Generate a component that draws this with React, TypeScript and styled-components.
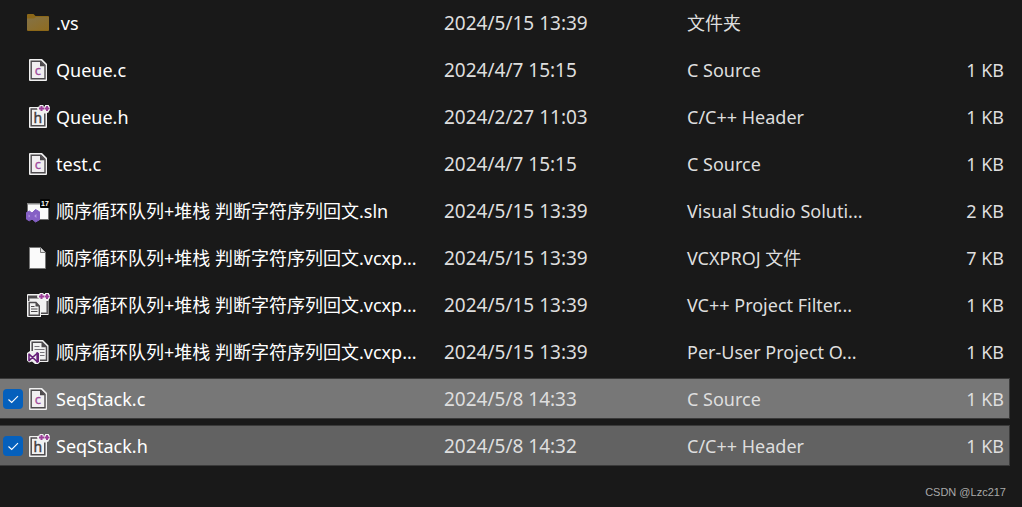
import React, { useState } from "react";
import styled, { createGlobalStyle } from "styled-components";

const GlobalStyle = createGlobalStyle`
  * { box-sizing: border-box; }
  body {
    margin: 0;
    background: #191919;
    color: #dedede;
    font-family: "Noto Sans", "Noto Sans CJK SC", sans-serif;
    font-size: 18px;
    line-height: 24px;
  }
`;

const Page = styled.main`
  min-height: 100vh;
  display: flex;
  flex-direction: column;
  justify-content: space-between;
  padding: 2px 12px 6px 0;
`;

const FileTable = styled.table`
  display: block;
`;

const FileRows = styled.tbody`
  display: flex;
  flex-direction: column;
  gap: 6px;
`;

const FileRow = styled.tr<{ $fill?: string }>`
  display: grid;
  grid-template-columns: 26px 30px 388px 243px 1fr 80px;
  align-items: center;
  height: 41px;
  padding-right: 5px;
  border: 1px solid ${(p) => (p.$fill ? "#3a3a3a" : "transparent")};
  border-left: 0;
  background: ${(p) => p.$fill ?? "transparent"};
`;

const Cell = styled.td`
  padding: 0;
  white-space: nowrap;
`;

const IconCell = styled(Cell)`
  display: flex;
`;

const NameCell = styled(Cell)`
  color: #fff;
`;

const DateCell = styled(Cell)`
  font-size: 19px;
`;

const SizeCell = styled(Cell)`
  text-align: right;
`;

const Check = styled.label`
  display: grid;
  width: 20px;
  height: 20px;
  margin-left: 3px;
  & > * { grid-area: 1 / 1; }
`;

const CheckBox = styled.input`
  appearance: none;
  width: 20px;
  height: 20px;
  margin: 0;
  border-radius: 4px;
  background: #0560bc;
`;

const CheckMark = styled.svg`
  width: 20px;
  height: 20px;
  pointer-events: none;
`;

const Icon = styled.svg.attrs({ viewBox: "0 0 24 24", "aria-hidden": true })`
  width: 24px;
  height: 24px;
  flex: none;
`;

const Watermark = styled.footer`
  padding-right: 4px;
  text-align: right;
  color: #a9a9a9;
  font: 11px/18px "Liberation Sans", sans-serif;
`;

const plusPath = "M13 3.5H18M15.5 1V6M18.5 3.5H23.5M21 1V6";

const Pluses = () => (
  <>
    <path d={plusPath} stroke="#f1f1f1" strokeWidth="4" strokeLinejoin="round" strokeLinecap="round" />
    <path d={plusPath} stroke="#9c3f98" strokeWidth="2" />
  </>
);

const FolderIcon = () => (
  <Icon>
    <defs>
      <linearGradient id="folder" x1="0" y1="0" x2="1" y2="1">
        <stop offset="0" stopColor="#847247" />
        <stop offset="1" stopColor="#8f6c20" />
      </linearGradient>
    </defs>
    <path d="M1 4Q1 3 2 3H7.5L9.5 5H22Q23 5 23 6V19.2Q23 20 22 20H2Q1 20 1 19Z" fill="#8b6718" />
    <path d="M1 7.5H8L10 6H23V19H1Z" fill="url(#folder)" />
  </Icon>
);

const SourceIcon = () => (
  <Icon>
    <path d="M4 1H16L21 6V22Q21 23 20 23H4Q3 23 3 22V2Q3 1 4 1Z" fill="#f1f1f1" />
    <path d="M5.5 3.2H14.8L19 7.4V20.8H5.2V3.2Z" fill="#f1eff1" stroke="#4d4a4d" strokeWidth="1.4" />
    <path d="M14 3V8.2H19.2Z" fill="#4d4a4d" />
    <text x="11.8" y="17" textAnchor="middle" fontFamily="Noto Sans, sans-serif" fontSize="13" fill="#a04a9c" stroke="#a04a9c" strokeWidth=".3">c</text>
  </Icon>
);

const HeaderIcon = () => (
  <Icon>
    <path d="M4 2H21V22Q21 23 20 23H4Q3 23 3 22V3Q3 2 4 2Z" fill="#f1f1f1" />
    <path d="M12 4H5.2V20.8H18.8V8.5" fill="none" stroke="#4d4a4d" strokeWidth="1.5" />
    <text x="11.8" y="17.5" textAnchor="middle" fontFamily="Noto Sans, sans-serif" fontSize="14" fill="#3f3c3f" stroke="#3f3c3f" strokeWidth=".4">h</text>
    <Pluses />
  </Icon>
);

const SolutionIcon = () => (
  <Icon>
    <path d="M1.5 4.5H22.5V20.5H1.5Z" fill="#fafafa" stroke="#707070" />
    <path d="M1 4H23V5.5H1Z" fill="#858585" />
    <path
      d="M.5 13.5L3.3 12L6 14L9.5 10.5L13.5 12.8V20.8L9.5 23L6 20L3.3 21.8L.5 20.2Z"
      fill="#8560c5"
      stroke="#8560c5"
      strokeWidth="1"
      strokeLinejoin="round"
    />
    <path d="M2.6 15.6L4.2 17L2.6 18.4ZM10.4 15V19L8.2 17Z" fill="#b79be4" />
    <rect x="14" y="0" width="10" height="9" rx="1" fill="#050505" />
    <text x="19" y="7" textAnchor="middle" fontFamily="Liberation Sans, sans-serif" fontWeight="700" fontSize="7" fill="#fff">17</text>
  </Icon>
);

const BlankIcon = () => (
  <Icon>
    <path d="M3.5 1.5H14.5L19.5 6.5V22.5H3.5Z" fill="#fafafa" stroke="#777" />
    <path d="M14.5 1.5V6.5H19.5" fill="#e2e2e2" stroke="#777" />
  </Icon>
);

const FiltersIcon = () => (
  <Icon>
    <path d="M2 1H22.5V22H15V24H2Q1 24 1 23V2Q1 1 2 1Z" fill="#f1f1f1" />
    <path d="M2 2.5H13V5.5H2Z" fill="#4d4a4d" />
    <path d="M2.7 5V8M21.2 8V20.3H15" fill="none" stroke="#4d4a4d" strokeWidth="1.4" />
    <path d="M3.2 9.5H10L13.3 13V22.2H3.2Z" fill="#f1f1f1" stroke="#4d4a4d" strokeWidth="1.4" />
    <path d="M9.5 9V13.5H14Z" fill="#4d4a4d" />
    <path d="M5 13.5H8.5M5 16H11.5M5 18.5H11.5" stroke="#4d4a4d" />
    <Pluses />
  </Icon>
);

const UserOptionsIcon = () => (
  <Icon>
    <path d="M6 0H17L22.5 5.5V21Q22.5 22 21.5 22H14L12 24H9L6 21.5L3 22.5L1 20.5V13L4 11V2Q4 0 6 0Z" fill="#f1f1f1" />
    <path d="M6.2 11V2.2H16L20.5 6.8V20.2H14" fill="none" stroke="#4d4a4d" strokeWidth="1.5" />
    <path d="M15.5 2V7.3H21Z" fill="#4d4a4d" />
    <path d="M8.5 6.5H13.5M8.5 9.5H18.5M14 12.5H18.5M14 15.5H18.5" stroke="#77747a" />
    <path d="M3 14.2V20.6L11.5 13V22L3 14.2Z" fill="none" stroke="#68217a" strokeWidth="1.6" strokeLinejoin="round" />
    <path d="M10.5 12L13 13.2V21.8L10.5 23Z" fill="#68217a" />
  </Icon>
);

interface FileItem {
  icon: () => React.JSX.Element;
  name: string;
  date: string;
  type: string;
  size?: string;
}

const files: FileItem[] = [
  { icon: FolderIcon, name: ".vs", date: "2024/5/15 13:39", type: "文件夹" },
  { icon: SourceIcon, name: "Queue.c", date: "2024/4/7 15:15", type: "C Source", size: "1 KB" },
  { icon: HeaderIcon, name: "Queue.h", date: "2024/2/27 11:03", type: "C/C++ Header", size: "1 KB" },
  { icon: SourceIcon, name: "test.c", date: "2024/4/7 15:15", type: "C Source", size: "1 KB" },
  { icon: SolutionIcon, name: "顺序循环队列+堆栈 判断字符序列回文.sln", date: "2024/5/15 13:39", type: "Visual Studio Soluti...", size: "2 KB" },
  { icon: BlankIcon, name: "顺序循环队列+堆栈 判断字符序列回文.vcxp...", date: "2024/5/15 13:39", type: "VCXPROJ 文件", size: "7 KB" },
  { icon: FiltersIcon, name: "顺序循环队列+堆栈 判断字符序列回文.vcxp...", date: "2024/5/15 13:39", type: "VC++ Project Filter...", size: "1 KB" },
  { icon: UserOptionsIcon, name: "顺序循环队列+堆栈 判断字符序列回文.vcxp...", date: "2024/5/15 13:39", type: "Per-User Project O...", size: "1 KB" },
  { icon: SourceIcon, name: "SeqStack.c", date: "2024/5/8 14:33", type: "C Source", size: "1 KB" },
  { icon: HeaderIcon, name: "SeqStack.h", date: "2024/5/8 14:32", type: "C/C++ Header", size: "1 KB" },
];

const focusedRow = 8;

export default function App() {
  const [selected, setSelected] = useState<number[]>([8, 9]);
  const toggle = (i: number) =>
    setSelected((s) => (s.includes(i) ? s.filter((n) => n !== i) : [...s, i]));

  return (
    <Page>
      <GlobalStyle />
      <FileTable>
        <FileRows>
          {files.map((file, i) => {
            const on = selected.includes(i);
            const FileIcon = file.icon;
            return (
              <FileRow key={i} $fill={on ? (i === focusedRow ? "#777777" : "#626262") : undefined}>
                <Cell>
                  {on && (
                    <Check>
                      <CheckBox type="checkbox" aria-label={file.name} checked onChange={() => toggle(i)} />
                      <CheckMark viewBox="0 0 20 20" aria-hidden="true">
                        <path d="M5.5 10.5L8.7 13.5L15 7.2" fill="none" stroke="#fff" strokeWidth="1.1" />
                      </CheckMark>
                    </Check>
                  )}
                </Cell>
                <IconCell><FileIcon /></IconCell>
                <NameCell onClick={() => toggle(i)}>{file.name}</NameCell>
                <DateCell>{file.date}</DateCell>
                <Cell>{file.type}</Cell>
                <SizeCell>{file.size}</SizeCell>
              </FileRow>
            );
          })}
        </FileRows>
      </FileTable>
      <Watermark>CSDN @Lzc217</Watermark>
    </Page>
  );
}
